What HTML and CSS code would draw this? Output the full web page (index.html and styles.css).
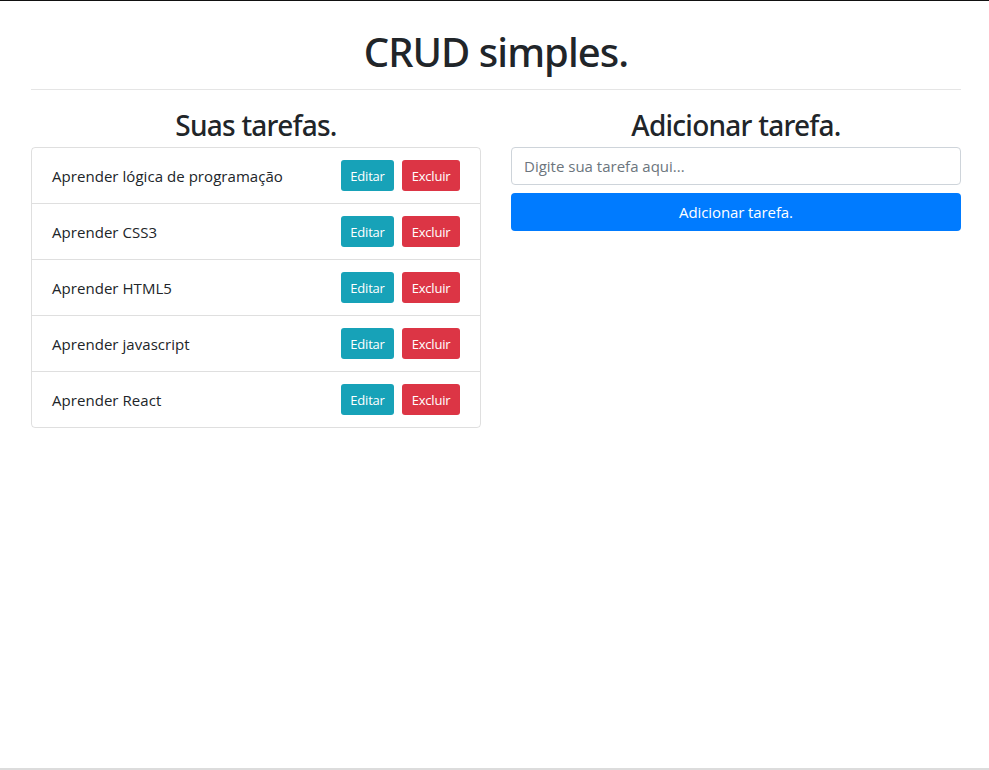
FILE: index.html
```html
<!DOCTYPE html>
<html lang="pt-BR">
<head>
<meta charset="utf-8">
<title>CRUD simples.</title>
<link rel="stylesheet" href="styles.css">
</head>
<body>
<div class="page">
  <div class="container">
    <h1 class="title">CRUD simples.</h1>
    <hr class="divider">
    <div class="row">
      <section class="col">
        <h3 class="col-title">Suas tarefas.</h3>
        <ul class="list">
          <li class="item"><span>Aprender lógica de programação</span><span class="actions"><button class="btn btn-info">Editar</button><button class="btn btn-danger">Excluir</button></span></li>
          <li class="item"><span>Aprender CSS3</span><span class="actions"><button class="btn btn-info">Editar</button><button class="btn btn-danger">Excluir</button></span></li>
          <li class="item"><span>Aprender HTML5</span><span class="actions"><button class="btn btn-info">Editar</button><button class="btn btn-danger">Excluir</button></span></li>
          <li class="item"><span>Aprender javascript</span><span class="actions"><button class="btn btn-info">Editar</button><button class="btn btn-danger">Excluir</button></span></li>
          <li class="item"><span>Aprender React</span><span class="actions"><button class="btn btn-info">Editar</button><button class="btn btn-danger">Excluir</button></span></li>
        </ul>
      </section>
      <section class="col">
        <h3 class="col-title">Adicionar tarefa.</h3>
        <input class="input" type="text" placeholder="Digite sua tarefa aqui...">
        <button class="btn-primary">Adicionar tarefa.</button>
      </section>
    </div>
  </div>
</div>
</body>
</html>
```
FILE: styles.css
```css
html, body {
  margin: 0;
  padding: 0;
}
body {
  font-family: "Open Sans", "Noto Sans", sans-serif;
  color: #212529;
  background: #fff;
}
.page {
  height: 770px;
  box-sizing: border-box;
  border-top: 1px solid #111;
  border-bottom: 2px solid #dcdcdc;
  overflow: hidden;
}
.container {
  margin: 0 28px 0 31px;
}
.title {
  margin: 27px 0 0;
  text-align: center;
  font-family: "Noto Sans", "Open Sans", sans-serif;
  font-size: 40px;
  font-weight: 500;
  line-height: 48px;
  letter-spacing: -0.95px;
}
.divider {
  margin: 13px 0 0;
  border: 0;
  border-top: 1px solid #e5e5e5;
}
.row {
  display: grid;
  grid-template-columns: 450px 450px;
  column-gap: 30px;
}
.col-title {
  margin: 18px 0 5px;
  text-align: center;
  font-family: "Noto Sans", "Open Sans", sans-serif;
  font-size: 28px;
  font-weight: 500;
  line-height: 34px;
  letter-spacing: -0.75px;
}
.list {
  list-style: none;
  margin: 0;
  padding: 0;
  border: 1px solid rgba(0,0,0,.125);
  border-radius: 4px;
}
.item {
  display: flex;
  align-items: center;
  justify-content: space-between;
  height: 55px;
  padding: 0 20px;
  font-size: 15px;
  letter-spacing: 0.05px;
  border-bottom: 1px solid rgba(0,0,0,.125);
}
.item:last-child {
  border-bottom: 0;
}
.actions {
  display: flex;
  gap: 8px;
}
.btn {
  font-family: inherit;
  font-size: 13px;
  letter-spacing: -0.2px;
  height: 31px;
  padding: 0 8px;
  border: 0;
  border-radius: 3px;
  color: #fff;
}
.btn-info {
  background: #17a2b8;
  width: 53px;
}
.btn-danger {
  background: #dc3545;
  width: 58px;
}
.input {
  display: block;
  box-sizing: border-box;
  width: 100%;
  height: 38px;
  padding: 0 12px;
  font-family: inherit;
  font-size: 15px;
  border: 1px solid #ced4da;
  border-radius: 4px;
  color: #495057;
}
.input::placeholder {
  color: #6c757d;
}
.btn-primary {
  display: block;
  width: 100%;
  height: 38px;
  margin-top: 8px;
  border: 0;
  border-radius: 4px;
  background: #007bff;
  color: #fff;
  font-family: inherit;
  font-size: 15px;
  letter-spacing: -0.1px;
}
```
